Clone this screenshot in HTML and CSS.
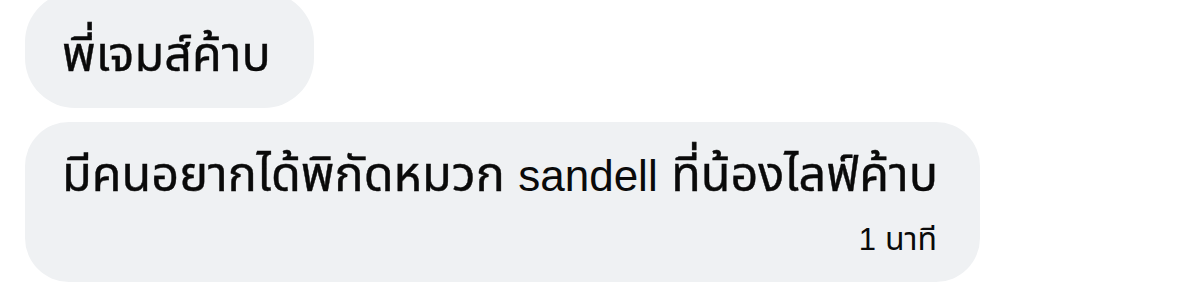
FILE: index.html
```html
<!DOCTYPE html>
<html lang="th">
<head>
<meta charset="utf-8">
<link rel="stylesheet" href="styles.css">
</head>
<body>
<div class="thread">
  <div class="bubble first">
    <div class="text">พี่เจมส์ค้าบ</div>
  </div>
  <div class="bubble second">
    <div class="text">มีคนอยากได้พิกัดหมวก <span class="latin">sandell</span> ที่น้องไลฟ์ค้าบ</div>
    <div class="time"><span class="digit">1</span> นาที</div>
  </div>
</div>
</body>
</html>
```

FILE: styles.css
```css
html, body {
  margin: 0;
  padding: 0;
  background: #ffffff;
}
body {
  width: 1199px;
  height: 306px;
  overflow: hidden;
  font-family: "Liberation Sans", "Noto Sans Thai", "Noto Sans", sans-serif;
  color: #0a0a0a;
}
.thread {
  display: flex;
  flex-direction: column;
  align-items: flex-start;
  gap: 14px;
  padding-left: 25px;
  margin-top: -8px;
}
.bubble {
  background: #eff1f3;
  border-radius: 50px;
  padding: 0 43px 0 37px;
}
.first {
  height: 116px;
  box-sizing: border-box;
  display: flex;
  align-items: center;
  padding-top: 8px;
}
.second {
  width: 955px;
  box-sizing: border-box;
  height: 160px;
  border-radius: 44px;
  display: flex;
  flex-direction: column;
  padding-top: 20px;
}
.text {
  font-size: 48.5px;
  line-height: 64px;
  white-space: nowrap;
  -webkit-text-stroke: 0.4px #0a0a0a;
}
.latin {
  font-size: 44px;
  -webkit-text-stroke: 0;
}
.time {
  font-size: 32px;
  line-height: 44px;
  align-self: flex-end;
  white-space: nowrap;
  margin-top: 9px;
}
.digit {
  font-size: 31px;
}
```
